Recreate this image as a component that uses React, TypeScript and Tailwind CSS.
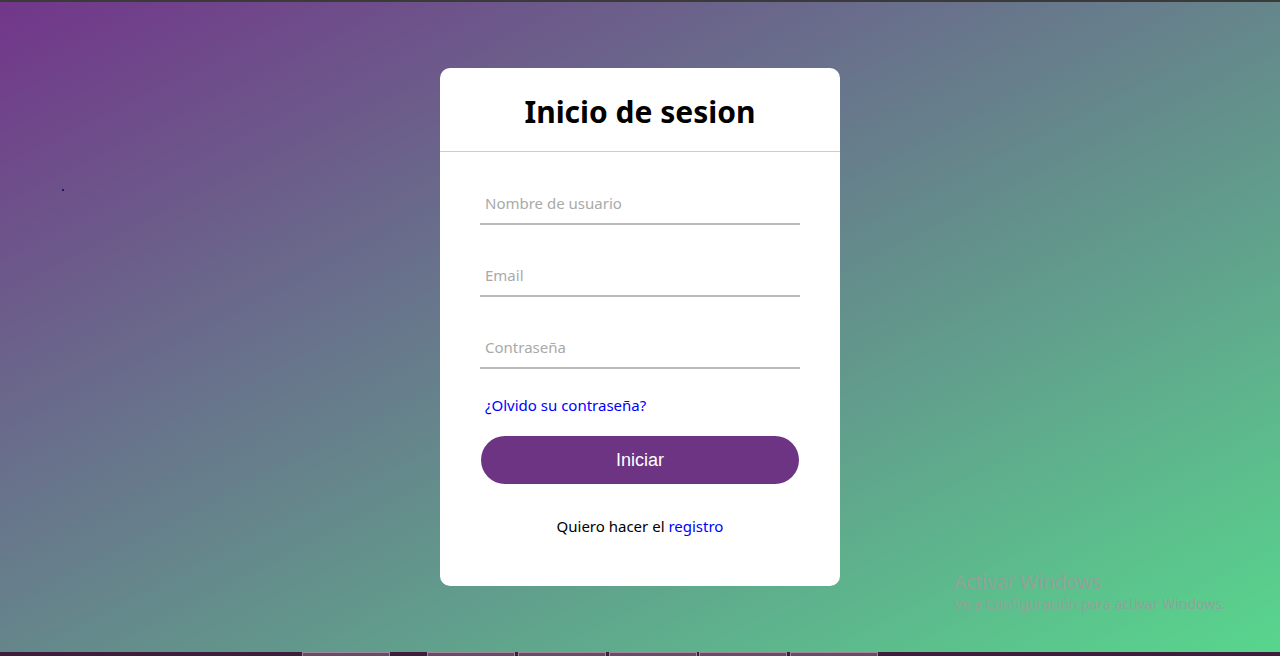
export default function App() {
  const tabs = [
    'w-[88px] ml-[302px]',
    'w-[88px] ml-[37px]',
    'w-[88px] ml-[3px]',
    'w-[88px] ml-[3px]',
    'w-[88px] ml-[2px]',
    'w-[88px] ml-[3px]',
  ];

  return (
    <div className="flex h-screen flex-col overflow-hidden bg-[#3c3c3c] font-['Noto_Sans',sans-serif]">
      {/* Top edge */}
      <div className="h-[2px] shrink-0 bg-[#3a3a3a]" />

      {/* Page */}
      <main className="relative flex flex-1 items-center justify-center bg-[linear-gradient(to_bottom_right,#72368a,#58d68d)]">
        <span className="absolute left-[62px] top-[187px] h-[2px] w-[2px] bg-[#1a1a6a]" />

        <div className="flex w-[400px] flex-col rounded-[10px] bg-white">
          <div className="flex h-[84px] items-center justify-center border-b border-[#cccccc]">
            <h1 className="pt-[4px] text-[30px] font-bold text-black">Inicio de sesion</h1>
          </div>

          <form className="flex flex-col px-10 pt-[31px] pb-[49px]">
            <div className="flex flex-col gap-[30px]">
              <Field placeholder="Nombre de usuario" />
              <Field placeholder="Email" />
              <Field placeholder="Contraseña" />
            </div>

            <a href="#" className="mt-[25px] pl-[5px] text-[15px] leading-[22px] text-[#0000ff]">
              ¿Olvido su contraseña?
            </a>

            <button
              type="button"
              className="mx-px mt-[20px] h-[48px] rounded-full bg-[#6c3483] font-['Liberation_Sans',sans-serif] text-[18px] text-white"
            >
              Iniciar
            </button>

            <p className="mt-[31px] text-center text-[15px] leading-[22px] text-black">
              Quiero hacer el <a href="#" className="text-[#0000ff]">registro</a>
            </p>
          </form>
        </div>

        {/* Activation watermark */}
        <div className="absolute left-[954px] top-[567px] text-[#8fa398]">
          <div className="text-[19px] leading-[26px]">Activar Windows</div>
          <div className="text-[14px] leading-[18px]">Ve a Configuración para activar Windows.</div>
        </div>
      </main>

      {/* Taskbar strip */}
      <div className="flex h-[4px] shrink-0 bg-[#3e1e3c]">
        {tabs.map((c, i) => (
          <div key={i} className={`${c} h-full border-t border-x border-[#9a8a9a] bg-[#6a4a66]`} />
        ))}
      </div>
    </div>
  );
}

function Field({ placeholder }: { placeholder: string }) {
  return (
    <div className="border-b-2 border-[#bbbbbb]">
      <input
        placeholder={placeholder}
        className="h-[40px] w-full px-[5px] text-[15px] text-black outline-none placeholder:text-[#a9a9a9]"
      />
    </div>
  );
}
